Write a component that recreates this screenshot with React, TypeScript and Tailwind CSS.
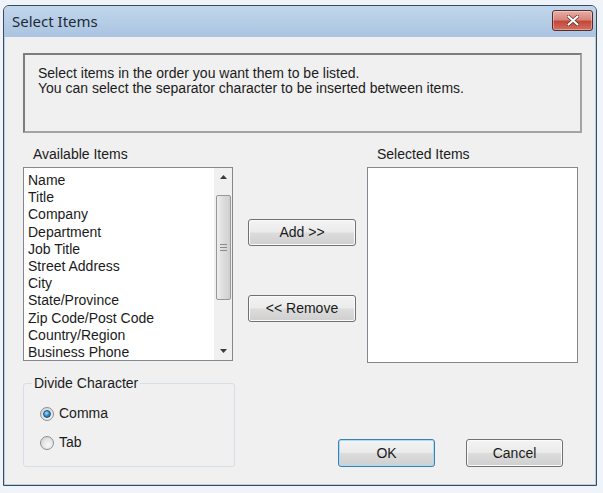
import React, { useState } from 'react';

const AVAILABLE = [
  'Name',
  'Title',
  'Company',
  'Department',
  'Job Title',
  'Street Address',
  'City',
  'State/Province',
  'Zip Code/Post Code',
  'Country/Region',
  'Business Phone',
];

const font = { fontFamily: '"Liberation Sans", Arial, sans-serif' };

// Win7-style push button
const PushButton: React.FC<{ label: string; isDefault?: boolean; className?: string }> = ({ label, isDefault, className = '' }) => (
  <button
    className={`flex items-center justify-center rounded-[3px] border text-[14px] text-[#1b1b1b] ${
      isDefault
        ? 'border-[#3c7fb1] shadow-[inset_0_0_0_1px_#a9dcf5]'
        : 'border-[#707070] shadow-[inset_0_0_0_1px_#fbfbfb]'
    } bg-[linear-gradient(to_bottom,#f3f3f3_0%,#ebebeb_48%,#dcdcdc_52%,#cfcfcf_100%)] ${className}`}
  >
    {label}
  </button>
);

const Radio: React.FC<{ checked: boolean; label: string; onClick: () => void }> = ({ checked, label, onClick }) => (
  <div className="flex items-center gap-[5px] h-[17px] cursor-default" onClick={onClick}>
    <span className="w-[14px] h-[14px] rounded-full border border-[#8e8f8f] bg-[radial-gradient(circle_at_60%_65%,#fafafa_0%,#e2e2e2_55%,#c9c9c9_100%)] flex items-center justify-center">
      {checked && (
        <span className="w-[8px] h-[8px] rounded-full bg-[radial-gradient(circle_at_40%_35%,#a7dcf6_0%,#2d86c4_55%,#175e94_100%)] border border-[#1c5180]" />
      )}
    </span>
    <span className="text-[14px] text-[#1b1b1b]">{label}</span>
  </div>
);

const ScrollBar: React.FC = () => (
  <div className="w-[18px] h-full flex flex-col bg-[#f0f0f0] border-l border-[#f0f0f0]">
    <div className="h-[18px] flex items-center justify-center">
      <svg width="7" height="4" viewBox="0 0 7 4">
        <path d="M0 4 L3.5 0 L7 4 Z" fill="#3a3a3a" />
      </svg>
    </div>
    <div className="h-[9px]" />
    <div className="h-[105px] mx-[1px] rounded-[2px] border border-[#979797] bg-[linear-gradient(to_right,#eeeeee,#dcdcdc_50%,#d0d0d0)] flex flex-col items-center justify-center gap-[2px]">
      <span className="w-[7px] h-px bg-[#8a8a8a]" />
      <span className="w-[7px] h-px bg-[#8a8a8a]" />
      <span className="w-[7px] h-px bg-[#8a8a8a]" />
    </div>
    <div className="flex-1" />
    <div className="h-[18px] flex items-center justify-center">
      <svg width="7" height="4" viewBox="0 0 7 4">
        <path d="M0 0 L7 0 L3.5 4 Z" fill="#3a3a3a" />
      </svg>
    </div>
  </div>
);

const App: React.FC = () => {
  const [divider, setDivider] = useState<'comma' | 'tab'>('comma');

  return (
    <div className="w-[603px] h-[493px] bg-[#eef4fa] pl-[3px] pt-[5px] overflow-hidden" style={font}>
      <div className="w-[594px] h-[481px] flex flex-col rounded-t-[6px] border border-[#3d4a59] bg-[#b6cde6]">
        {/* Title bar */}
        <div className="h-[31px] flex items-center justify-between pl-[8px] pr-[3px] rounded-t-[5px] bg-[linear-gradient(to_bottom,#c1d6ec,#aac4e0)]">
          <span className="text-[15px] text-[#1e2a36]" style={{ fontFamily: '"Noto Sans", "Open Sans", sans-serif' }}>
            Select Items
          </span>
          <div className="w-[41px] h-[21px] mb-[2px] rounded-[3px] border border-[#5c2a26] bg-[linear-gradient(to_bottom,#e6aea6_0%,#d7877d_45%,#c5473b_55%,#d0705f_100%)] flex items-center justify-center shadow-[inset_0_0_0_1px_rgba(255,255,255,0.35)]">
            <svg width="12" height="11" viewBox="0 0 12 11">
              <path d="M1.5 1.5 L10.5 9.5 M10.5 1.5 L1.5 9.5" stroke="#5a2520" strokeWidth="3.4" strokeLinecap="round" />
              <path d="M1.5 1.5 L10.5 9.5 M10.5 1.5 L1.5 9.5" stroke="#ffffff" strokeWidth="2.2" strokeLinecap="round" />
            </svg>
          </div>
        </div>

        {/* Client area */}
        <div className="flex-1 mx-[1px] mb-[1px] bg-[#f0f0f0] pl-[18px] text-[#1b1b1b]">
          <div className="mt-[16px] w-[559px] h-[80px] border-2 border-[#7d7d7d] border-r-[#a3a3a3] border-b-[#a3a3a3] pl-[13px] pt-[11px] text-[14px] leading-[15px]">
            <p>Select items in the order you want them to be listed.</p>
            <p>You can select the separator character to be inserted between items.</p>
          </div>

          <div className="flex mt-[13px] h-[17px] text-[14px] leading-[17px]">
            <span className="ml-[10px] w-[344px]">Available Items</span>
            <span>Selected Items</span>
          </div>

          <div className="flex items-start mt-[4px]">
            <div className="w-[210px] h-[194px] border border-[#828790] bg-white flex">
              <ul className="flex-1 pl-[4px] pt-[4px] text-[14px] leading-[17.2px]">
                {AVAILABLE.map((item) => (
                  <li key={item} className="whitespace-nowrap">
                    {item}
                  </li>
                ))}
              </ul>
              <ScrollBar />
            </div>

            <div className="ml-[15px] pt-[52px] flex flex-col gap-[49px]">
              <PushButton label="Add >>" className="w-[108px] h-[27px]" />
              <PushButton label="<< Remove" className="w-[108px] h-[27px]" />
            </div>

            <div className="ml-[11px] w-[211px] h-[196px] border border-[#828790] bg-white" />
          </div>

          <div className="flex items-start mt-[12px]">
            <fieldset className="w-[212px] h-[92px] border border-[#d5dfe5] rounded-[3px] pl-[16px] pr-2 m-0">
              <legend className="ml-[-8px] px-[2px] text-[14px] leading-[17px]">Divide Character</legend>
              <div className="flex flex-col gap-[12px] mt-[13px]">
                <Radio checked={divider === 'comma'} label="Comma" onClick={() => setDivider('comma')} />
                <Radio checked={divider === 'tab'} label="Tab" onClick={() => setDivider('tab')} />
              </div>
            </fieldset>
            <div className="flex gap-[31px] ml-[103px] mt-[64px]">
              <PushButton label="OK" isDefault className="w-[97px] h-[28px]" />
              <PushButton label="Cancel" className="w-[97px] h-[28px]" />
            </div>
          </div>
        </div>
      </div>
    </div>
  );
};

export default App;
